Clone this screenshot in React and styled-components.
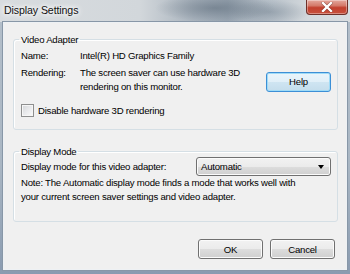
import React from 'react';
import styled, { createGlobalStyle } from 'styled-components';

const Global = createGlobalStyle`
  html, body { margin: 0; padding: 0; width: 350px; height: 274px; overflow: hidden; }
  body { font-family: "Liberation Sans", Arial, sans-serif; }
`;

const Window = styled.div`
  width: 350px;
  height: 274px;
  box-sizing: border-box;
  display: flex;
  flex-direction: column;
  padding-bottom: 4px;
  background: linear-gradient(180deg, #b4bfca 0%, #a9b6c3 60%, #8a9bb0 100%);
`;

const TitleBar = styled.div`
  height: 22px;
  flex: none;
  display: flex;
  align-items: flex-start;
  justify-content: space-between;
  padding: 0 2px 0 4px;
  background:
    radial-gradient(ellipse 60px 14px at 215px 8px, rgba(90,105,120,0.55), rgba(90,105,120,0) 100%),
    radial-gradient(ellipse 40px 12px at 270px 12px, rgba(110,125,140,0.45), rgba(110,125,140,0) 100%),
    linear-gradient(90deg, #d8dcdf 0%, #d2d7db 40%, #aab4be 55%, #9aa6b2 65%, #bac3cb 78%, #d3d8dc 88%, #d9dde0 100%);
`;

const Title = styled.div`
  margin-top: 4px;
  font-family: "Liberation Sans", Arial, sans-serif;
  font-size: 10.6px;
  letter-spacing: -0.1px;
  line-height: 13px;
  color: #111;
  text-shadow: 0 0 4px #fff, 0 0 6px #fff, 0 0 8px rgba(255,255,255,0.9);
`;

const CloseButton = styled.div`
  width: 42px;
  height: 15px;
  box-sizing: border-box;
  display: flex;
  align-items: center;
  justify-content: center;
  border: 1px solid #6e3029;
  border-top: none;
  border-radius: 0 0 4px 4px;
  background: linear-gradient(180deg, #e4a89d 0%, #d47a6a 40%, #c2402e 55%, #c8503c 100%);
  box-shadow: inset 0 0 0 1px rgba(255,255,255,0.35);
`;

const Client = styled.div`
  flex: 1;
  margin: 0 3px;
  box-sizing: border-box;
  background: #f0f0f0;
  border: 1px solid #eef1f4;
  box-shadow: 0 0 0 1px #8897a7;
  padding: 10px 8px 0 9px;
  display: flex;
  flex-direction: column;
  font-size: 9.6px;
  letter-spacing: -0.22px;
  color: #000;
`;

const Group = styled.fieldset`
  margin: ${p => p.$gap || 0}px 0 0;
  padding: 3px 6px ${p => p.$bottom}px 7px;
  border: 1px solid #d5dfe5;
  border-radius: 3px;
  box-shadow: inset 1px 1px 0 #fff;
  min-width: 0;
`;

const Legend = styled.legend`
  padding: 0 2px;
  margin-left: -2px;
  line-height: 13px;
  font-size: 9.6px;
`;

const InfoRow = styled.div`
  display: flex;
  align-items: flex-start;
  margin-top: ${p => p.$top || 0}px;
  line-height: ${p => p.$lh || 13}px;
`;

const Label = styled.div`
  width: 59px;
  flex: none;
`;

const Value = styled.div`
  flex: 1;
`;

const Button = styled.div`
  width: 65px;
  height: 20px;
  box-sizing: border-box;
  flex: none;
  display: flex;
  align-items: center;
  justify-content: center;
  border-radius: 3px;
  font-size: 9.6px;
  margin-top: ${p => p.$mt || 0}px;
  border: 1px solid ${p => (p.$focus ? '#3c8fd6' : '#707070')};
  background: ${p => (p.$focus
    ? 'linear-gradient(180deg, #eaf5fb 0%, #e0eff8 50%, #cfe5f2 51%, #c4ddec 100%)'
    : 'linear-gradient(180deg, #f2f2f2 0%, #ebebeb 50%, #dddddd 51%, #cfcfcf 100%)')};
  box-shadow: inset 0 0 0 1px ${p => (p.$focus ? '#9fdbf7' : '#fbfbfb')};
`;

const CheckRow = styled.label`
  display: flex;
  align-items: center;
  gap: 4px;
  margin-top: 10px;
  line-height: 13px;
`;

const CheckBox = styled.span`
  width: 13px;
  height: 13px;
  box-sizing: border-box;
  flex: none;
  border: 1px solid #8e8f8f;
  background: linear-gradient(135deg, #d3d5d8 0%, #e9eaec 50%, #fbfbfb 100%);
  box-shadow: inset 0 0 0 1px #f6f6f6;
`;

const ModeRow = styled.div`
  display: flex;
  align-items: center;
  justify-content: space-between;
  margin-top: -4px;
`;

const Combo = styled.div`
  width: 135px;
  height: 19px;
  box-sizing: border-box;
  display: flex;
  align-items: center;
  justify-content: space-between;
  padding: 0 6px 0 4px;
  border: 1px solid #707070;
  border-radius: 3px;
  background: linear-gradient(180deg, #f2f2f2 0%, #ebebeb 50%, #dddddd 51%, #cfcfcf 100%);
  box-shadow: inset 0 0 0 1px #fbfbfb;
`;

const Arrow = styled.span`
  width: 0;
  height: 0;
  border-left: 3.5px solid transparent;
  border-right: 3.5px solid transparent;
  border-top: 4px solid #000;
`;

const Note = styled.div`
  margin-top: 0;
  line-height: 14px;
`;

const Footer = styled.div`
  display: flex;
  justify-content: flex-end;
  gap: 7px;
  margin-top: 17px;
  padding-right: 3px;
`;

export default function App() {
  return (
    <>
      <Global />
      <Window>
        <TitleBar>
          <Title>Display Settings</Title>
          <CloseButton>
            <svg width="12" height="10" viewBox="0 0 12 10">
              <path d="M2 1 L10 9 M10 1 L2 9" stroke="#4a1a14" strokeWidth="3.4" strokeLinecap="square" opacity="0.45" />
              <path d="M2 1 L10 9 M10 1 L2 9" stroke="#fff" strokeWidth="2.4" strokeLinecap="square" />
            </svg>
          </CloseButton>
        </TitleBar>
        <Client>
          <Group $bottom={12}>
            <Legend>Video Adapter</Legend>
            <InfoRow>
              <Label>Name:</Label>
              <Value>Intel(R) HD Graphics Family</Value>
            </InfoRow>
            <InfoRow $top={4} $lh={14}>
              <Label>Rendering:</Label>
              <Value>The screen saver can use hardware 3D<br />rendering on this monitor.</Value>
              <Button $focus $mt={6}>Help</Button>
            </InfoRow>
            <CheckRow>
              <CheckBox />
              Disable hardware 3D rendering
            </CheckRow>
          </Group>
          <Group $gap={15} $bottom={17}>
            <Legend>Display Mode</Legend>
            <ModeRow>
              <span>Display mode for this video adapter:</span>
              <Combo>
                <span>Automatic</span>
                <Arrow />
              </Combo>
            </ModeRow>
            <Note>
              Note: The Automatic display mode finds a mode that works well with<br />
              your current screen saver settings and video adapter.
            </Note>
          </Group>
          <Footer>
            <Button>OK</Button>
            <Button>Cancel</Button>
          </Footer>
        </Client>
      </Window>
    </>
  );
}
